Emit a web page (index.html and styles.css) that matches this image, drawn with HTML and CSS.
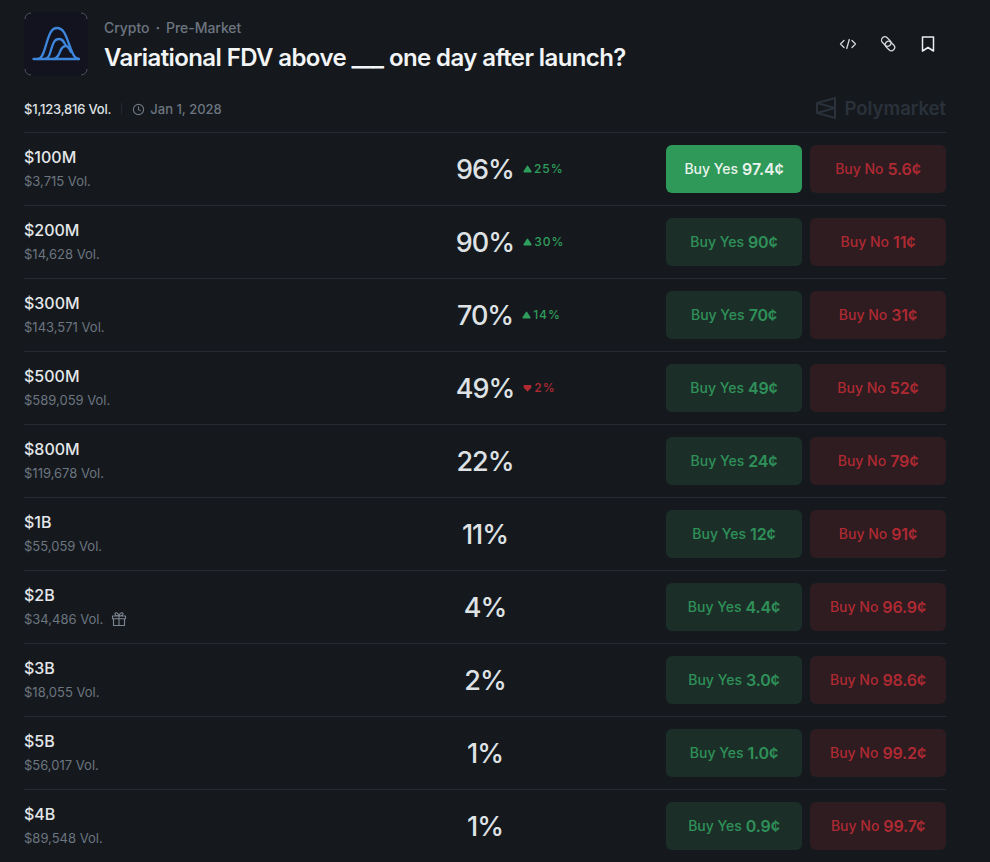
FILE: index.html
```html
<!DOCTYPE html><html>
<head>
  <meta name="viewport" content="width=device-width, initial-scale=1.0">
  <title>Variational FDV above ___ one day after launch?</title>
  <link rel="stylesheet" href="styles.css">
</head><body>

<header class="head">
  <svg class="logo" viewBox="0 0 64 64" fill="none">
    <rect x=".5" y=".5" width="63" height="63" rx="6" fill="#12131f"/>
    <path d="M1 7a6 6 0 0 1 6-6M57 1a6 6 0 0 1 6 6M63 57a6 6 0 0 1-6 6M7 63a6 6 0 0 1-6-6" stroke="#5e636c" stroke-width=".8"/>
    <g stroke="#3d86dc" stroke-width="2.300" stroke-linecap="round">
      <path d="M9.500 47h45"/>
      <path d="M14 47c4 0 6-7 8-14 3-10 5-17 11-17 7 0 9 8 12 16 3 8 5 15 10 15"/>
      <path d="M21 47c3 0 5-5 6-9 2-6 3-11 8-11 4 0 5 3 7 7"/>
      <path d="M29 47c4 0 5-3 7-7 1-3 3-6 6-6 2 0 3 2 5 6"/>
    </g>
  </svg>
  <div class="head-text">
    <div class="crumbs"><span>Crypto</span><span class="dot">·</span><span>Pre-Market</span></div>
    <h1>Variational FDV above ___ one day after launch?</h1>
  </div>
  <div class="actions">
    <svg viewBox="0 0 18 18" fill="none" stroke="#d5d8dc" stroke-width="1.300" stroke-linecap="round" stroke-linejoin="round"><path d="M5 5.500 1.500 9 5 12.500M13 5.500 16.500 9 13 12.500M10.300 4.500 7.700 13.500"/></svg>
    <svg viewBox="0 0 18 18" fill="none" stroke="#d5d8dc" stroke-width="1.300"><rect x="2" y="3.200" width="10.500" height="6.600" rx="3.300" transform="rotate(45 7.200 6.500)"/><rect x="5.700" y="7.700" width="10.500" height="6.600" rx="3.300" transform="rotate(45 11 11)"/></svg>
    <svg viewBox="0 0 18 18" fill="none" stroke="#eceef0" stroke-width="1.500" stroke-linejoin="round"><path d="M3.500 2h11v14L9 12.500 3.500 16z"/></svg>
  </div>
</header>

<div class="meta">
  <span class="total">$1,123,816 Vol.</span>
  <span class="pipe"></span>
  <svg class="clock" viewBox="0 0 14 14" fill="none" stroke="#6c7580" stroke-width="1.200" stroke-linecap="round"><circle cx="7" cy="7" r="5.500"/><path d="M7 4v3.200l2 1"/></svg>
  <span class="date">Jan 1, 2028</span>
  <div class="brand">
    <svg viewBox="0 0 20 24" fill="none" stroke="#2a313a" stroke-width="2"><path d="M19 2v20L1 17V7zM1 7l18 5M1 17l18-5"/></svg>
    <span>Polymarket</span>
  </div>
</div>

<main class="rows">
  <div class="row">
    <div class="name"><b>$100M</b><small>$3,715 Vol.</small></div>
    <div class="pct"><span class="num">96%<span class="chg up"><svg viewBox="0 0 8 7"><path d="M4 1.200 7 5.800H1z"/></svg>25%</span></span></div>
    <div class="btns"><a class="yes on">Buy Yes <b>97.4¢</b></a><a class="no">Buy No <b>5.6¢</b></a></div>
  </div>
  <div class="row">
    <div class="name"><b>$200M</b><small>$14,628 Vol.</small></div>
    <div class="pct"><span class="num">90%<span class="chg up"><svg viewBox="0 0 8 7"><path d="M4 1.200 7 5.800H1z"/></svg>30%</span></span></div>
    <div class="btns"><a class="yes">Buy Yes <b>90¢</b></a><a class="no">Buy No <b>11¢</b></a></div>
  </div>
  <div class="row">
    <div class="name"><b>$300M</b><small>$143,571 Vol.</small></div>
    <div class="pct"><span class="num">70%<span class="chg up"><svg viewBox="0 0 8 7"><path d="M4 1.200 7 5.800H1z"/></svg>14%</span></span></div>
    <div class="btns"><a class="yes">Buy Yes <b>70¢</b></a><a class="no">Buy No <b>31¢</b></a></div>
  </div>
  <div class="row">
    <div class="name"><b>$500M</b><small>$589,059 Vol.</small></div>
    <div class="pct"><span class="num">49%<span class="chg down"><svg viewBox="0 0 8 7"><path d="M1.200 1.500h5.600v1.200L4 5.800 1.200 2.700z"/></svg>2%</span></span></div>
    <div class="btns"><a class="yes">Buy Yes <b>49¢</b></a><a class="no">Buy No <b>52¢</b></a></div>
  </div>
  <div class="row">
    <div class="name"><b>$800M</b><small>$119,678 Vol.</small></div>
    <div class="pct"><span class="num">22%</span></div>
    <div class="btns"><a class="yes">Buy Yes <b>24¢</b></a><a class="no">Buy No <b>79¢</b></a></div>
  </div>
  <div class="row">
    <div class="name"><b>$1B</b><small>$55,059 Vol.</small></div>
    <div class="pct"><span class="num">11%</span></div>
    <div class="btns"><a class="yes">Buy Yes <b>12¢</b></a><a class="no">Buy No <b>91¢</b></a></div>
  </div>
  <div class="row">
    <div class="name"><b>$2B</b><small>$34,486 Vol.
      <svg class="gift" viewBox="0 0 16 16" fill="none" stroke="#7d8691" stroke-width="1.100" stroke-linejoin="round"><path d="M1.500 5h13v2.800h-13zM2.500 7.800V14.500h11V7.800M8 5v9.500M8 5C6 5 4 4.200 4 2.800 4 1.200 7 1 8 5c1-4 4-3.800 4-2.200C12 4.200 10 5 8 5z"/></svg>
    </small></div>
    <div class="pct"><span class="num">4%</span></div>
    <div class="btns"><a class="yes">Buy Yes <b>4.4¢</b></a><a class="no">Buy No <b>96.9¢</b></a></div>
  </div>
  <div class="row">
    <div class="name"><b>$3B</b><small>$18,055 Vol.</small></div>
    <div class="pct"><span class="num">2%</span></div>
    <div class="btns"><a class="yes">Buy Yes <b>3.0¢</b></a><a class="no">Buy No <b>98.6¢</b></a></div>
  </div>
  <div class="row">
    <div class="name"><b>$5B</b><small>$56,017 Vol.</small></div>
    <div class="pct"><span class="num">1%</span></div>
    <div class="btns"><a class="yes">Buy Yes <b>1.0¢</b></a><a class="no">Buy No <b>99.2¢</b></a></div>
  </div>
  <div class="row">
    <div class="name"><b>$4B</b><small>$89,548 Vol.</small></div>
    <div class="pct"><span class="num">1%</span></div>
    <div class="btns"><a class="yes">Buy Yes <b>0.9¢</b></a><a class="no">Buy No <b>99.7¢</b></a></div>
  </div>
</main>

</body></html>
```

FILE: styles.css
```css
* { box-sizing: border-box; }
html, body { height: 100%; }
body {
  margin: 0;
  padding: 12px 44px 0 24px;
  overflow: hidden;
  font-family: Inter, "Liberation Sans", sans-serif;
  font-size: 14px;
  color: #e4e7ea;
  background: #15191d;
}

.head { display: flex; align-items: center; gap: 16px; height: 64px; }
.logo { width: 64px; height: 64px; flex: none; }
.head-text { flex: 1; padding-top: 3px; }
.crumbs { display: flex; gap: 6px; font-size: 14px; line-height: 17px; font-weight: 500; color: #6c7580; letter-spacing: -.05px; }
.dot { font-weight: 700; }
h1 { margin: 7px 0 0; font-size: 24px; line-height: 30px; font-weight: 600; color: #f2f4f5; letter-spacing: -.6px; }
.actions { display: flex; gap: 22px; margin-right: 9px; }
.actions svg { width: 18px; height: 18px; }

.meta { display: flex; align-items: center; height: 56px; padding-top: 10px; font-size: 13px; }
.total { font-weight: 500; color: #dfe2e5; letter-spacing: -.2px; }
.pipe { width: 1px; height: 12px; margin: 0 10px; background: #22282e; }
.clock { width: 13px; height: 13px; margin-right: 5px; }
.date { color: #6c7580; font-weight: 500; }
.brand { display: flex; align-items: center; gap: 9px; margin-left: auto; padding-bottom: 2px; color: #2a313a; font-size: 18.500px; font-weight: 600; }
.brand svg { width: 20px; height: 24px; }

.row {
  display: grid;
  grid-template-columns: 1fr 200px 1fr;
  align-items: center;
  height: 73px;
  border-top: 1px solid #262b31;
}
.name { padding-bottom: 3px; }
.name b { display: block; font-size: 16px; line-height: 20px; font-weight: 500; color: #e4e7ea; }
.name small { display: flex; align-items: center; gap: 8px; margin-top: 6px; font-size: 13px; line-height: 16px; font-weight: 400; color: #6c7580; }
.gift { width: 16px; height: 16px; }

.pct { padding-top: 1px; text-align: center; }
.num { position: relative; display: inline-block; font-size: 27px; line-height: 34px; font-weight: 500; color: #dfe2e5; letter-spacing: -1px; }
.chg { position: absolute; left: 100%; top: 8px; margin-left: 9px; display: flex; align-items: center; gap: 2px; font-size: 12px; line-height: 16px; letter-spacing: 1px; white-space: nowrap; font-weight: 500; }
.chg svg { display: block; width: 9px; height: 8px; fill: currentColor; stroke: currentColor; stroke-width: 1.400; stroke-linejoin: round; }
.chg.up { color: #2f9e5c; }
.chg.down { color: #b02a33; }

.btns { display: flex; justify-content: flex-end; gap: 8px; }
.btns a {
  display: flex;
  align-items: center;
  justify-content: center;
  gap: 4px;
  width: 136px;
  height: 48px;
  padding-bottom: 1px;
  border-radius: 6px;
  font-size: 14px;
  font-weight: 500;
}
.btns b { font-size: 16px; font-weight: 600; letter-spacing: -.15px; }
.yes { background: #1b2f28; color: #2f9159; }
.yes.on { background: #2f9959; color: #e9f3ec; }
.no { background: #2f1c20; color: #ae2a33; }
```
